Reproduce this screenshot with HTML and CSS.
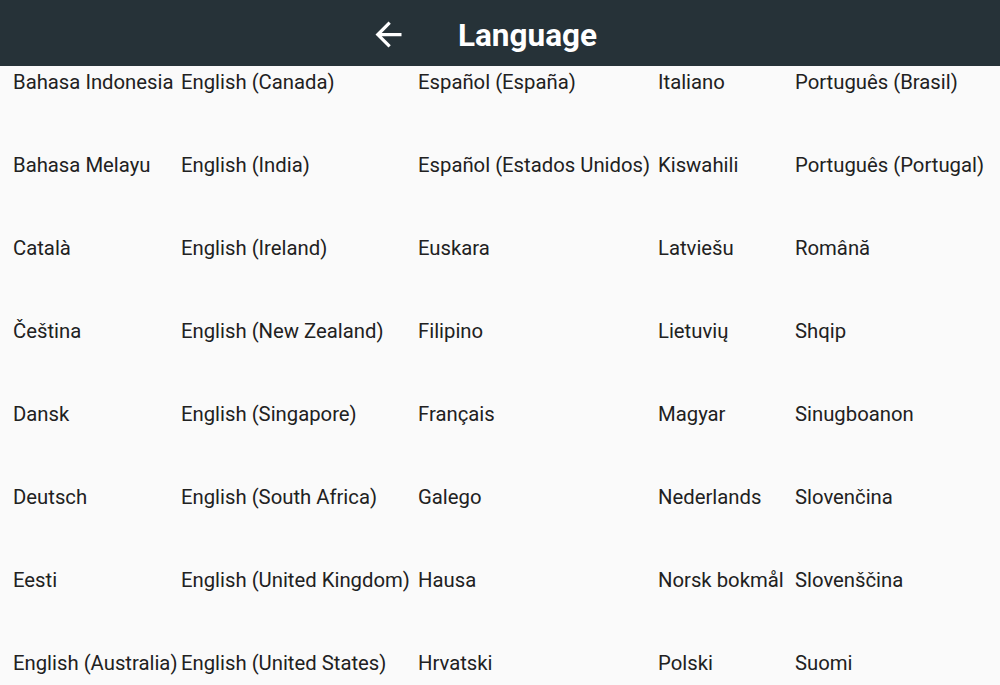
FILE: index.html
```html
<!DOCTYPE html>
<html>
<head>
<meta charset="utf-8">
<link rel="stylesheet" href="styles.css">
</head>
<body>
<header class="bar">
  <svg class="back" viewBox="0 0 24 24" width="39" height="39"><path d="M20 11H7.83l5.59-5.59L12 4l-8 8 8 8 1.41-1.41L7.83 13H20v-2z" fill="#fff"/></svg>
  <h1 class="title">Language</h1>
</header>
<main class="grid">
  <div>Bahasa Indonesia</div><div>English (Canada)</div><div>Español (España)</div><div>Italiano</div><div>Português (Brasil)</div>
  <div>Bahasa Melayu</div><div>English (India)</div><div>Español (Estados Unidos)</div><div>Kiswahili</div><div>Português (Portugal)</div>
  <div>Català</div><div>English (Ireland)</div><div>Euskara</div><div>Latviešu</div><div>Română</div>
  <div>Čeština</div><div>English (New Zealand)</div><div>Filipino</div><div>Lietuvių</div><div>Shqip</div>
  <div>Dansk</div><div>English (Singapore)</div><div>Français</div><div>Magyar</div><div>Sinugboanon</div>
  <div>Deutsch</div><div>English (South Africa)</div><div>Galego</div><div>Nederlands</div><div>Slovenčina</div>
  <div>Eesti</div><div>English (United Kingdom)</div><div>Hausa</div><div>Norsk bokmål</div><div>Slovenščina</div>
  <div>English (Australia)</div><div>English (United States)</div><div>Hrvatski</div><div>Polski</div><div>Suomi</div>
</main>
</body>
</html>
```
FILE: styles.css
```css
html, body {
  margin: 0;
  padding: 0;
  background: #fafafa;
  font-family: Roboto, "Liberation Sans", sans-serif;
  overflow: hidden;
}
.bar {
  height: 66px;
  background: #263238;
  display: flex;
  align-items: center;
  justify-content: center;
  gap: 50px;
  padding-right: 34px;
  box-sizing: border-box;
}
.back {
  display: block;
  margin-top: 2px;
}
.title {
  margin: 0;
  color: #fff;
  font-size: 31.5px;
  font-weight: 700;
  line-height: 1;
  margin-top: 5px;
}
.grid {
  display: grid;
  grid-template-columns: 168px 237px 240px 137px auto;
  grid-auto-rows: 83px;
  padding: 4px 0 0 13px;
  color: #212121;
  font-size: 20.3px;
  line-height: 24px;
}
.grid > div {
  white-space: nowrap;
}
```
